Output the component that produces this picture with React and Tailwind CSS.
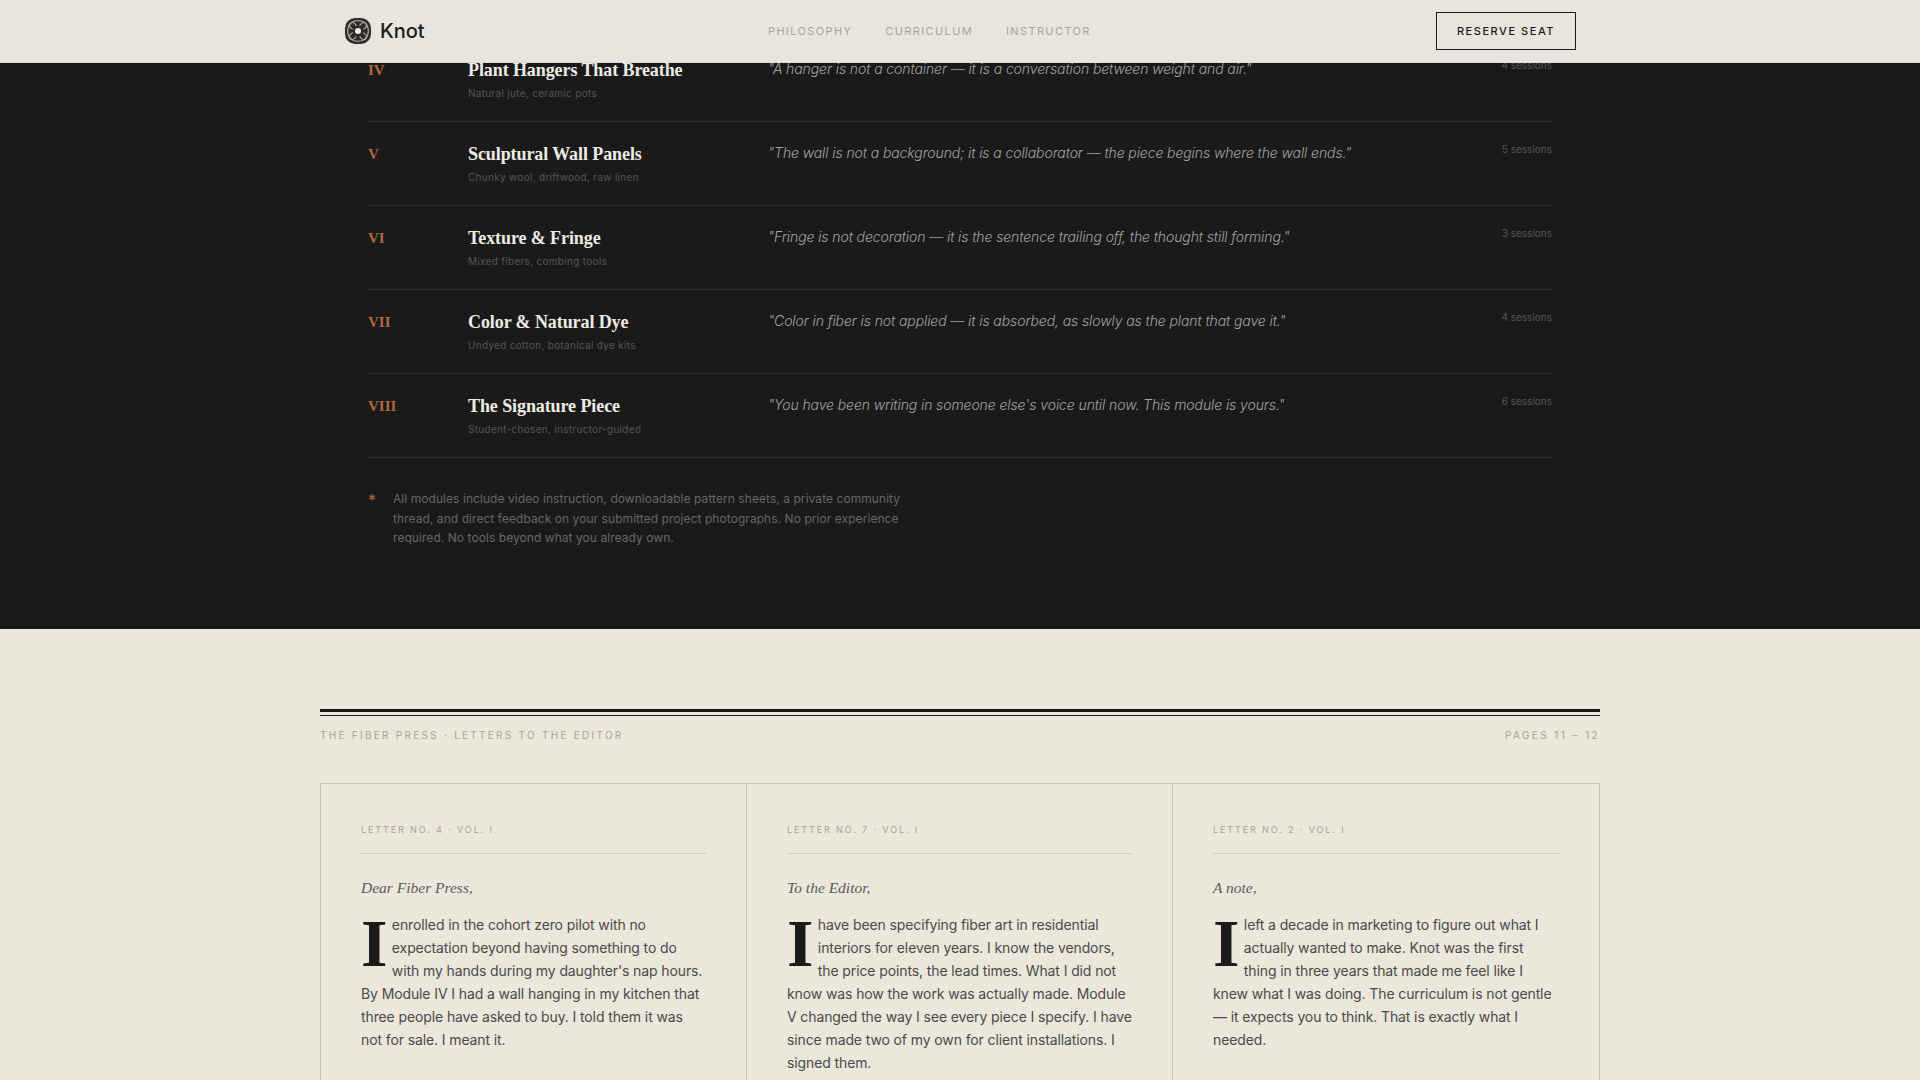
import React from "react";

const modules = [
  { num: "IV", title: "Plant Hangers That Breathe", materials: "Natural jute, ceramic pots", quote: "\"A hanger is not a container — it is a conversation between weight and air.\"", sessions: "4 sessions" },
  { num: "V", title: "Sculptural Wall Panels", materials: "Chunky wool, driftwood, raw linen", quote: "\"The wall is not a background; it is a collaborator — the piece begins where the wall ends.\"", sessions: "5 sessions" },
  { num: "VI", title: "Texture & Fringe", materials: "Mixed fibers, combing tools", quote: "\"Fringe is not decoration — it is the sentence trailing off, the thought still forming.\"", sessions: "3 sessions" },
  { num: "VII", title: "Color & Natural Dye", materials: "Undyed cotton, botanical dye kits", quote: "\"Color in fiber is not applied — it is absorbed, as slowly as the plant that gave it.\"", sessions: "4 sessions" },
  { num: "VIII", title: "The Signature Piece", materials: "Student-chosen, instructor-guided", quote: "\"You have been writing in someone else's voice until now. This module is yours.\"", sessions: "6 sessions" },
];

const letters = [
  { label: "LETTER NO. 4 · VOL. I", greeting: "Dear Fiber Press,", body: "enrolled in the cohort zero pilot with no expectation beyond having something to do with my hands during my daughter's nap hours. By Module IV I had a wall hanging in my kitchen that three people have asked to buy. I told them it was not for sale. I meant it." },
  { label: "LETTER NO. 7 · VOL. I", greeting: "To the Editor,", body: "have been specifying fiber art in residential interiors for eleven years. I know the vendors, the price points, the lead times. What I did not know was how the work was actually made. Module V changed the way I see every piece I specify. I have since made two of my own for client installations. I signed them." },
  { label: "LETTER NO. 2 · VOL. I", greeting: "A note,", body: "left a decade in marketing to figure out what I actually wanted to make. Knot was the first thing in three years that made me feel like I knew what I was doing. The curriculum is not gentle — it expects you to think. That is exactly what I needed." },
];

function KnotLogo() {
  return (
    <svg width="28" height="28" viewBox="0 0 28 28" fill="none">
      <rect x="1" y="1" width="26" height="26" rx="10" fill="#2f2d29" />
      <g stroke="#bdb9af" strokeWidth="1.1">
        <ellipse cx="14" cy="8.5" rx="8.5" ry="4.8" />
        <ellipse cx="14" cy="19.5" rx="8.5" ry="4.8" />
        <ellipse cx="8.5" cy="14" rx="4.8" ry="8.5" />
        <ellipse cx="19.5" cy="14" rx="4.8" ry="8.5" />
      </g>
      <circle cx="14" cy="14" r="5.5" fill="#2f2d29" />
      <circle cx="14" cy="14" r="3" fill="#f2efe9" />
    </svg>
  );
}

export default function App() {
  return (
    <div className="relative h-screen overflow-hidden bg-[#ebe7db] font-['Inter',sans-serif]">
      {/* Nav */}
      <nav className="absolute inset-x-0 top-0 z-10 h-[63px] border-b border-[#dedad2] bg-[#e8e4de]">
        <div className="mx-auto flex h-full max-w-[1280px] items-center justify-between px-6">
          <div className="flex w-[424px] items-center gap-2">
            <KnotLogo />
            <span className="text-xl font-medium text-[#1a1a1a]">Knot</span>
          </div>
          <div className="flex gap-[33px] text-[11px] tracking-[0.125em] text-[#a8a49e]">
            <span>PHILOSOPHY</span>
            <span>CURRICULUM</span>
            <span>INSTRUCTOR</span>
          </div>
          <div className="ml-auto border border-[#1a1a1a] px-5 py-3 text-[11px] leading-3 font-medium tracking-[0.14em] text-[#1a1a1a]">
            RESERVE SEAT
          </div>
        </div>
      </nav>

      {/* Curriculum */}
      <section className="h-[629px] bg-[#1a1a1a] pt-[38px]">
        <div className="mx-auto max-w-[1280px] px-12">
          {modules.map((m) => (
            <div key={m.num} className="grid h-[84px] grid-cols-[100px_300px_1fr_auto] border-b border-[#2e2e2e] pt-[23px]">
              <span className="font-['Liberation_Serif',serif] text-[15px] leading-[18px] font-bold text-[#b5673a]">{m.num}</span>
              <div>
                <div className="font-['Liberation_Serif',serif] text-[18px] leading-[19px] font-bold tracking-[-0.005em] text-[#f0ece4]">{m.title}</div>
                <div className="mt-1.5 text-[10px] tracking-[0.03em] text-[#555]">{m.materials}</div>
              </div>
              <p className="text-sm leading-4 font-light tracking-[-0.007em] text-[#a3a3a3] italic">{m.quote}</p>
              <span className="text-[10px] leading-[9px] text-[#555]">{m.sessions}</span>
            </div>
          ))}
          <div className="mt-[31px] flex items-start text-xs leading-[19.6px] tracking-[0.005em] text-[#666]">
            <span className="w-[25px] text-base leading-[22px] text-[#b5673a]">*</span>
            <p className="w-[520px]">
              All modules include video instruction, downloadable pattern sheets, a private community thread, and direct feedback on your submitted project photographs. No prior experience required. No tools beyond what you already own.
            </p>
          </div>
        </div>
      </section>

      {/* Letters */}
      <section className="pt-20">
        <div className="mx-auto max-w-[1280px]">
          <div className="h-[7px] border-t-[3px] border-b border-[#1a1a1a]" />
          <div className="mt-3 flex justify-between text-[10px] text-[#a8a498]">
            <span className="tracking-[0.227em]">THE FIBER PRESS · LETTERS TO THE EDITOR</span>
            <span className="tracking-[0.24em]">PAGES 11 – 12</span>
          </div>
          <div className="mt-10 grid grid-cols-3 border border-[#c8c4b8]">
            {letters.map((l, i) => (
              <article key={l.label} className={`p-10 ${i < 2 ? "border-r border-[#c8c4b8]" : ""}`}>
                <div className="border-b border-[#d0ccc0] pb-[17px] text-[9px] leading-3 tracking-[0.21em] text-[#a8a498]">{l.label}</div>
                <p className="mt-[22px] font-['Liberation_Serif',serif] text-[15.5px] text-[#5c5c5c] italic">{l.greeting}</p>
                <p className="mt-3.5 text-sm leading-[23px] tracking-[-0.008em] text-[#4a4a4a]">
                  <span className="float-left mr-[4.5px] font-['Liberation_Serif',serif] text-[68px] leading-[60px] font-bold text-[#1a1a1a]">I</span>
                  {l.body}
                </p>
              </article>
            ))}
          </div>
        </div>
      </section>
    </div>
  );
}
